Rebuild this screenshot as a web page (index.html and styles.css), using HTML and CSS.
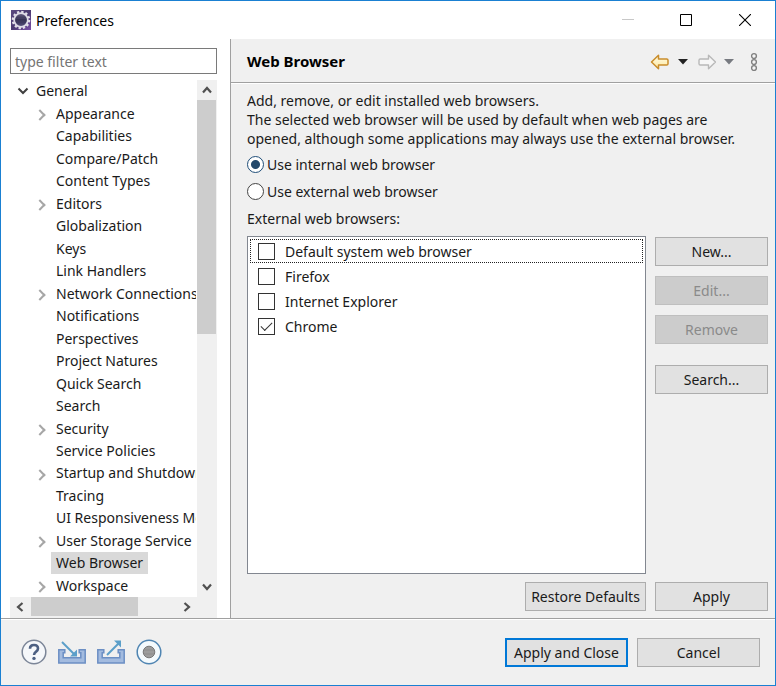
FILE: index.html
```html
<!DOCTYPE html>
<html lang="en">
<head>
<meta charset="utf-8">
<title>Preferences</title>
<link rel="stylesheet" href="styles.css">
</head>
<body>
<div class="window">
  <header class="titlebar">
    <svg class="app-icon" width="20" height="20" viewBox="0 0 20 20">
      <defs>
        <linearGradient id="purple" x1="0" y1="0" x2="1" y2="1"><stop offset="0" stop-color="#5b4a80"/><stop offset=".5" stop-color="#4a3a70"/><stop offset="1" stop-color="#7a4fa8"/></linearGradient>
        <linearGradient id="globe" x1="0" y1="0" x2="0" y2="1"><stop offset="0" stop-color="#6a6285"/><stop offset=".5" stop-color="#2e2a4c"/><stop offset="1" stop-color="#5a5480"/></linearGradient>
      </defs>
      <rect width="20" height="20" fill="url(#purple)"/>
      <circle cx="10" cy="10" r="8.2" fill="none" stroke="#e4e1ea" stroke-width="2.2" stroke-dasharray="2.3 1.99"/>
      <circle cx="10" cy="10" r="6.8" fill="url(#globe)" stroke="#dedbe6" stroke-width="1.8"/>
      <path d="M4.5 8.8h11M4.5 11h11" stroke="#4a4568" stroke-width=".8"/>
    </svg>
    <h1 class="title">Preferences</h1>
    <button class="caption" aria-label="Minimize" disabled><svg width="12" height="12"><path d="M0 5.5h12" stroke="#c8c8c8"/></svg></button>
    <button class="caption" aria-label="Maximize"><svg width="12" height="12"><path d="M.5.5h11v11H.5z" fill="none" stroke="#000"/></svg></button>
    <button class="caption" aria-label="Close"><svg width="12" height="12"><path d="M0 0l12 12M12 0L0 12" stroke="#000" stroke-width="1.1"/></svg></button>
  </header>

  <div class="body">
    <nav class="sidebar">
      <input class="filter" type="text" placeholder="type filter text" aria-label="Filter">
      <div class="tree-box">
        <ul class="tree">
          <li class="row root"><svg class="twist" width="12" height="8"><path d="M1.5 1.5L6 6l4.500-4.500" fill="none" stroke="#404040" stroke-width="2"/></svg><span class="label">General</span></li>
          <li class="row parent"><span class="label">Appearance</span></li>
          <li class="row"><span class="label">Capabilities</span></li>
          <li class="row"><span class="label">Compare/Patch</span></li>
          <li class="row"><span class="label">Content Types</span></li>
          <li class="row parent"><span class="label">Editors</span></li>
          <li class="row"><span class="label">Globalization</span></li>
          <li class="row"><span class="label">Keys</span></li>
          <li class="row"><span class="label">Link Handlers</span></li>
          <li class="row parent"><span class="label">Network Connections</span></li>
          <li class="row"><span class="label">Notifications</span></li>
          <li class="row"><span class="label">Perspectives</span></li>
          <li class="row"><span class="label">Project Natures</span></li>
          <li class="row"><span class="label">Quick Search</span></li>
          <li class="row"><span class="label">Search</span></li>
          <li class="row parent"><span class="label">Security</span></li>
          <li class="row"><span class="label">Service Policies</span></li>
          <li class="row parent"><span class="label">Startup and Shutdown</span></li>
          <li class="row"><span class="label">Tracing</span></li>
          <li class="row"><span class="label">UI Responsiveness Monitoring</span></li>
          <li class="row parent"><span class="label">User Storage Service</span></li>
          <li class="row"><span class="label selected">Web Browser</span></li>
          <li class="row parent"><span class="label">Workspace</span></li>
        </ul>
        <div class="vbar">
          <button class="arrow" aria-label="Scroll up"><svg width="10" height="8"><path d="M1 6.500L5 2l4 4.500" fill="none" stroke="#505050" stroke-width="2.200"/></svg></button>
          <div class="vtrack"><div class="vthumb"></div></div>
          <button class="arrow" aria-label="Scroll down"><svg width="10" height="8"><path d="M1 1.500L5 6l4-4.500" fill="none" stroke="#505050" stroke-width="2.200"/></svg></button>
        </div>
        <div class="hbar">
          <button class="arrow" aria-label="Scroll left"><svg width="8" height="10"><path d="M6.500 1L2 5l4.500 4" fill="none" stroke="#505050" stroke-width="2.200"/></svg></button>
          <div class="htrack"><div class="hthumb"></div></div>
          <button class="arrow" aria-label="Scroll right"><svg width="8" height="10"><path d="M1.500 1L6 5 1.500 9" fill="none" stroke="#505050" stroke-width="2.200"/></svg></button>
        </div>
      </div>
    </nav>

    <main class="page">
      <div class="page-head">
        <h2 class="page-title">Web Browser</h2>
        <div class="tools">
          <button class="tool" aria-label="Back"><svg width="20" height="16"><defs><linearGradient id="gold" x1="0" y1="0" x2="0" y2="1"><stop offset="0" stop-color="#fffbe6"/><stop offset="1" stop-color="#fde9a0"/></linearGradient></defs><path d="M1.500 8L8.500 1.200V5h8.200q1.300 0 1.300 1.300v3.400Q18 11 16.700 11H8.500v3.800z" fill="url(#gold)" stroke="#c98d2b" stroke-width="1.500" stroke-linejoin="round"/></svg></button>
          <button class="tool" aria-label="Back history"><svg width="10" height="6"><path d="M0 0h10L5 5.500z" fill="#222"/></svg></button>
          <button class="tool" aria-label="Forward" disabled><svg width="20" height="16"><path d="M19.500 8L12.500 1.200V5H4.300Q3 5 3 6.300v3.400Q3 11 4.300 11h8.200v3.800z" fill="#f6f6f6" stroke="#b8b8b8" stroke-width="1.400" stroke-linejoin="round"/></svg></button>
          <button class="tool" aria-label="Forward history"><svg width="10" height="6"><path d="M0 0h10L5 5.500z" fill="#777a80"/></svg></button>
          <button class="tool menu" aria-label="Menu"><svg width="8" height="20"><g fill="#f4f4f4" stroke="#808080" stroke-width="1.400"><circle cx="4" cy="4" r="2.400"/><circle cx="4" cy="10" r="2.400"/><circle cx="4" cy="16" r="2.400"/></g></svg></button>
        </div>
      </div>
      <div class="content">
        <p class="intro">Add, remove, or edit installed web browsers.<br>The selected web browser will be used by default when web pages are<br>opened, although some applications may always use the external browser.</p>
        <label class="choice"><input type="radio" name="mode" checked>Use internal web browser</label>
        <label class="choice"><input type="radio" name="mode">Use external web browser</label>
        <p class="caption-text" id="list-label">External web browsers:</p>
        <div class="columns">
          <div class="list" role="group" aria-labelledby="list-label">
            <label class="item focused"><input type="checkbox">Default system web browser</label>
            <label class="item"><input type="checkbox">Firefox</label>
            <label class="item"><input type="checkbox">Internet Explorer</label>
            <label class="item"><input type="checkbox" checked>Chrome</label>
          </div>
          <div class="actions">
            <button class="btn">New...</button>
            <button class="btn" disabled>Edit...</button>
            <button class="btn" disabled>Remove</button>
            <button class="btn apart">Search...</button>
          </div>
        </div>
        <div class="apply-row">
          <button class="btn restore">Restore Defaults</button>
          <button class="btn side">Apply</button>
        </div>
      </div>
    </main>
  </div>

  <footer class="footer">
    <div class="foot-icons">
      <button class="tool" aria-label="Help"><svg width="26" height="26" viewBox="0 0 26 26"><circle cx="13" cy="13" r="11.800" fill="#f5f7fa" stroke="#7c8698" stroke-width="1.500"/><path d="M9 9.800Q9 6 13 6t4 3.500q0 1.800-1.900 3.100T13 16" fill="none" stroke="#4c5f82" stroke-width="2.600"/><circle cx="13" cy="19.400" r="1.700" fill="#4c5f82"/></svg></button>
      <button class="tool" aria-label="Import"><svg width="28" height="26" viewBox="0 0 28 26"><path d="M.8 10.800h6v3H5.200v5h17.600v-5h-1.600v-3h6V24H.8z" fill="#a3bbdf" stroke="#6c8fc4" stroke-width="1.500"/><path d="M4 3l13 13" stroke="#5b9fc9" stroke-width="2"/><path d="M19 17.500v-7l-7 7z" fill="#5b9fc9"/></svg></button>
      <button class="tool" aria-label="Export"><svg width="28" height="26" viewBox="0 0 28 26"><path d="M.8 10.800h6v3H5.200v5h17.600v-5h-1.600v-3h6V24H.8z" fill="#a3bbdf" stroke="#6c8fc4" stroke-width="1.500"/><path d="M10 16L22 4" stroke="#5b9fc9" stroke-width="2"/><path d="M17 1.500h7v7z" fill="#5b9fc9"/></svg></button>
      <button class="tool" aria-label="Record"><svg width="26" height="26" viewBox="0 0 26 26"><circle cx="13" cy="13" r="11.800" fill="#f4fafd" stroke="#5085b2" stroke-width="1.500"/><circle cx="13" cy="13" r="5.800" fill="#9c9c9c" stroke="#777" stroke-width="1"/><path d="M8 11h10M8 15h10" stroke="#8c8c8c"/></svg></button>
    </div>
    <button class="btn wide default">Apply and Close</button>
    <button class="btn wide">Cancel</button>
  </footer>
</div>
</body>
</html>
```
FILE: styles.css
```css
* { box-sizing: border-box; }

body {
  margin: 0;
  color: #1a1a1a;
  font: 14px/19px "Noto Sans", "Open Sans", sans-serif;
}

h1, h2, p, ul { margin: 0; padding: 0; }
svg { display: block; }

button, input { font: inherit; color: inherit; margin: 0; }

.window {
  display: flex;
  flex-direction: column;
  min-height: 100vh;
  border: 1px solid #1a80d2;
  background: #f0f0f0;
}

/* Title bar */
.titlebar {
  display: flex;
  align-items: center;
  height: 38px;
  padding-left: 10px;
  background: #fff;
}
.title {
  flex: 1;
  padding-left: 5px;
  font-size: 14px;
  font-weight: 400;
  color: #000;
}
.caption {
  display: flex;
  align-items: center;
  justify-content: center;
  width: 58px;
  height: 38px;
  padding: 0;
  border: 0;
  background: none;
}
.caption:last-child { width: 60px; }

.body { display: flex; flex: 1; }

/* Page tree */
.sidebar {
  display: flex;
  flex-direction: column;
  gap: 6px;
  width: 230px;
  padding: 9px 13px 0 9px;
  border-right: 1px solid #a0a0a0;
  background: #fff;
}
.filter {
  width: 100%;
  height: 26px;
  padding: 0 4px;
  border: 1px solid #7a7a7a;
  background: #fff;
}
.filter::placeholder { color: #757575; opacity: 1; }
.tree-box {
  display: grid;
  flex: 1;
  grid-template-columns: minmax(0, 1fr) 20px;
  grid-template-rows: 1fr 21px;
}
.tree {
  display: flex;
  flex-direction: column;
  overflow: hidden;
  margin-right: 1px;
  list-style: none;
}
.row {
  display: flex;
  flex: 1;
  align-items: center;
  padding-left: 41px;
  white-space: nowrap;
}
.root { padding-left: 7px; }
.root .label { padding-left: 7px; }
.parent { padding-left: 26px; }
.parent::before {
  content: "";
  flex: none;
  width: 6px;
  height: 6px;
  margin: 3px 7px 0 0;
  border: solid #a6a6a6;
  border-width: 2px 2px 0 0;
  transform: rotate(45deg);
}
.label { padding: 0 5px; line-height: 22px; }
.selected { background: #d9d9d9; }

.vbar { display: flex; flex-direction: column; background: #f0f0f0; }
.hbar { display: flex; grid-column: 1 / 3; padding-right: 20px; background: #f0f0f0; }
.arrow {
  display: flex;
  align-items: center;
  justify-content: center;
  width: 20px;
  height: 20px;
  padding: 0;
  border: 0;
  background: none;
}
.vtrack, .htrack { flex: 1; }
.vthumb { width: 19px; height: 49%; background: #cdcdcd; }
.htrack { padding-left: 1px; }
.hthumb { width: 73%; height: 19px; background: #cdcdcd; }

/* Settings page */
.page {
  display: flex;
  flex: 1;
  flex-direction: column;
  min-width: 0;
}
.page-head {
  display: flex;
  align-items: center;
  justify-content: space-between;
  height: 44px;
  padding: 2px 17px 0 16px;
  border-bottom: 1px solid #a0a0a0;
  box-shadow: 0 1px #fff;
}
.page-title { font-size: 15px; font-weight: 700; color: #000; }
.tools { display: flex; align-items: center; gap: 8px; }
.tool { padding: 0; border: 0; background: none; }
.menu { margin-left: 8px; }

.content {
  display: flex;
  flex: 1;
  flex-direction: column;
  padding: 8px 7px 7px 16px;
}
.choice { display: flex; align-items: center; gap: 3px; }
.intro + .choice { margin-top: 7px; }
.choice + .choice { margin-top: 8px; }
.choice input {
  appearance: none;
  width: 17px;
  height: 17px;
  border: 1px solid #444;
  border-radius: 50%;
  background: #fff;
}
.choice input:checked {
  border-color: #1f4e79;
  background: radial-gradient(circle, #24496b 4px, #fff 5px);
}
.caption-text { margin: 8px 0; }

.columns { display: flex; flex: 1; gap: 9px; }
.list {
  flex: 1;
  padding: 2px;
  border: 1px solid #828790;
  background: #fff;
}
.item {
  display: flex;
  align-items: center;
  gap: 10px;
  height: 25px;
  padding-left: 8px;
}
.focused {
  height: 24px;
  margin-bottom: 1px;
  outline: 1px dotted #222;
  outline-offset: -1px;
}
.item input {
  appearance: none;
  width: 17px;
  height: 17px;
  border: 1px solid #333;
  background: #fff;
}
.item input:checked::after {
  content: "";
  display: block;
  width: 10px;
  height: 5px;
  margin: 3px 0 0 2px;
  border: solid #333;
  border-width: 0 0 1px 1px;
  transform: rotate(-45deg);
}

.actions {
  display: flex;
  flex-direction: column;
  gap: 10px;
  width: 113px;
  padding-top: 1px;
}
.apart { margin-top: 11px; }

.btn {
  height: 29px;
  padding: 0;
  border: 1px solid #adadad;
  background: #e1e1e1;
  text-align: center;
}
.btn:disabled { border-color: #bfbfbf; background: #ccc; color: #8a8a8a; }
.apply-row {
  display: flex;
  justify-content: flex-end;
  gap: 9px;
  margin-top: 8px;
}
.restore { width: 121px; }
.side { width: 113px; }

/* Dialog footer */
.footer {
  display: flex;
  align-items: center;
  gap: 9px;
  height: 67px;
  padding: 0 15px 0 20px;
  border-top: 1px solid #a0a0a0;
  box-shadow: inset 0 1px #fff;
}
.foot-icons { display: flex; flex: 1; gap: 11px; }
.wide { width: 123px; }
.default { border: 2px solid #0078d7; }
```
